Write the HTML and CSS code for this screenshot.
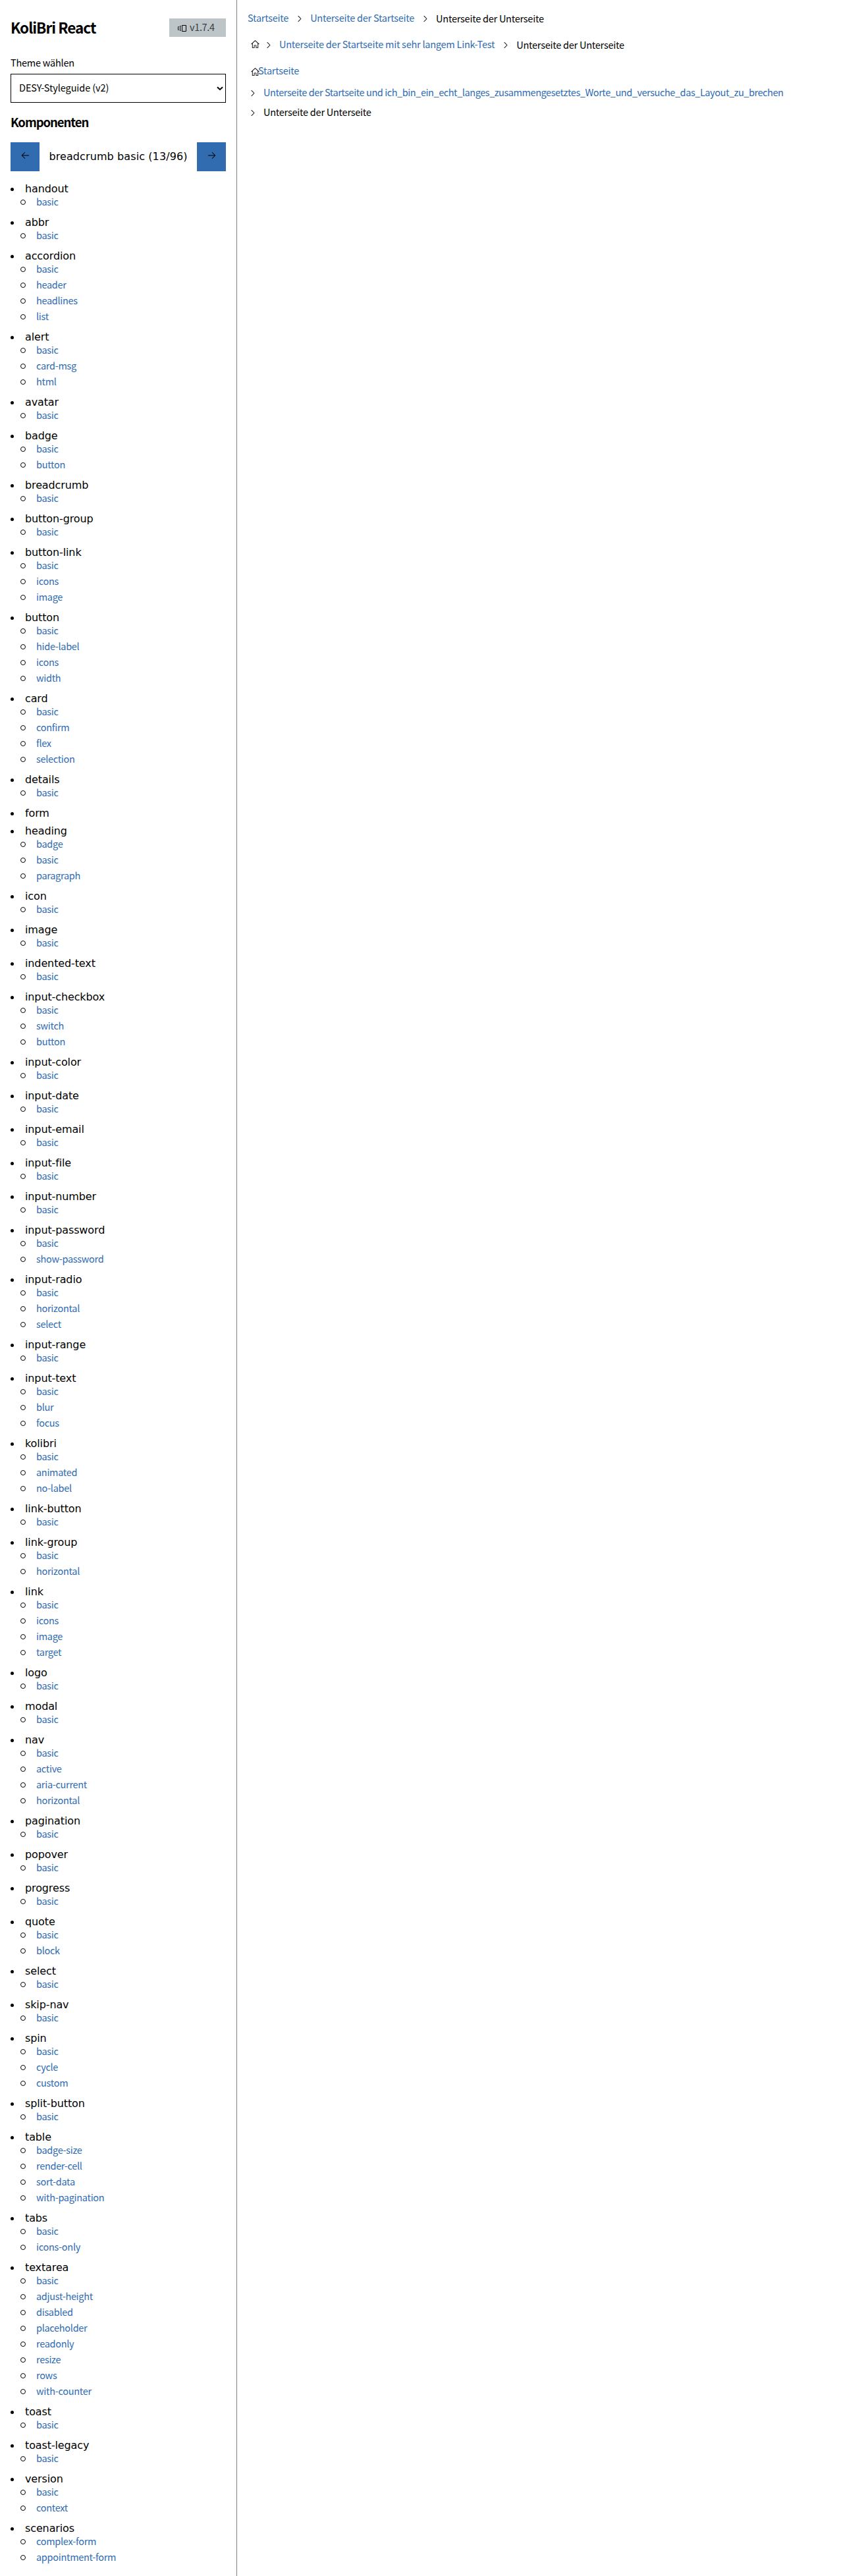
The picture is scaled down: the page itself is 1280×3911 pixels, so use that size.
FILE: index.html
```html
<!DOCTYPE html>
<html lang="de">
<head>
<meta charset="utf-8">
<title>KoliBri React</title>
<link rel="stylesheet" href="styles.css">
</head>
<body>
<svg class="sprite" aria-hidden="true">
  <symbol id="chevron" viewBox="0 0 16 16"><path d="M10.072 8.024L5.715 3.667l.618-.62L11 7.716v.618L6.333 13l-.618-.619 4.357-4.357z"/></symbol>
  <symbol id="home" viewBox="0 0 16 16"><path fill-rule="evenodd" d="M8.36 1.37l6.36 5.8-.71.71L13 6.964v6.526l-.5.5h-3l-.5-.5v-3.5H7v3.5l-.5.5h-3l-.5-.5V6.972L2 7.88l-.71-.71 6.35-5.8h.72zM4 6.063v6.927h2v-3.5l.5-.5h3l.5.5v3.5h2V6.057L8 2.43 4 6.063z"/></symbol>
  <symbol id="left" viewBox="0 0 16 16"><path d="M7 3.093l-5 5V8.8l5 5 .707-.707-4.146-4.147H14v-1H3.56L7.708 3.8 7 3.093z"/></symbol>
  <symbol id="right" viewBox="0 0 16 16"><path d="M9 13.887l5-5V8.18l-5-5-.707.707 4.146 4.147H2v1h10.44L8.292 13.18l.707.707z"/></symbol>
  <symbol id="versions" viewBox="0 0 15 15"><path fill="none" stroke="#000" d="M7.500 3.500h6v9h-6zM5.500 4.500h-1v7h1M2.500 5.500h-1v5h1"/></symbol>
</svg>
<div class="layout">
  <aside class="sidebar">
    <header class="head">
      <h1 class="title">KoliBri React</h1>
      <span class="badge"><svg class="icon"><use href="#versions"/></svg><span class="text">v1.7.4</span></span>
    </header>
    <label class="label" for="theme">Theme wählen</label>
    <div class="select" id="theme"><span class="text">DESY-Styleguide (v2)</span><svg class="caret" viewBox="0 0 10 7"><path d="M1 1.3l4 3.7 4-3.7" fill="none" stroke="#000" stroke-width="2"/></svg></div>
    <h2 class="subtitle">Komponenten</h2>
    <div class="pager">
      <button class="step" aria-label="zurück"><svg class="icon"><use href="#left"/></svg></button>
      <span class="current">breadcrumb basic (13/96)</span>
      <button class="step" aria-label="weiter"><svg class="icon"><use href="#right"/></svg></button>
    </div>
    <ul class="groups">
      <li>handout<ul><li><a>basic</a></li></ul></li>
      <li>abbr<ul><li><a>basic</a></li></ul></li>
      <li>accordion<ul><li><a>basic</a></li><li><a>header</a></li><li><a>headlines</a></li><li><a>list</a></li></ul></li>
      <li>alert<ul><li><a>basic</a></li><li><a>card-msg</a></li><li><a>html</a></li></ul></li>
      <li>avatar<ul><li><a>basic</a></li></ul></li>
      <li>badge<ul><li><a>basic</a></li><li><a>button</a></li></ul></li>
      <li>breadcrumb<ul><li><a>basic</a></li></ul></li>
      <li>button-group<ul><li><a>basic</a></li></ul></li>
      <li>button-link<ul><li><a>basic</a></li><li><a>icons</a></li><li><a>image</a></li></ul></li>
      <li>button<ul><li><a>basic</a></li><li><a>hide-label</a></li><li><a>icons</a></li><li><a>width</a></li></ul></li>
      <li>card<ul><li><a>basic</a></li><li><a>confirm</a></li><li><a>flex</a></li><li><a>selection</a></li></ul></li>
      <li>details<ul><li><a>basic</a></li></ul></li>
      <li>form<ul></ul></li>
      <li>heading<ul><li><a>badge</a></li><li><a>basic</a></li><li><a>paragraph</a></li></ul></li>
      <li>icon<ul><li><a>basic</a></li></ul></li>
      <li>image<ul><li><a>basic</a></li></ul></li>
      <li>indented-text<ul><li><a>basic</a></li></ul></li>
      <li>input-checkbox<ul><li><a>basic</a></li><li><a>switch</a></li><li><a>button</a></li></ul></li>
      <li>input-color<ul><li><a>basic</a></li></ul></li>
      <li>input-date<ul><li><a>basic</a></li></ul></li>
      <li>input-email<ul><li><a>basic</a></li></ul></li>
      <li>input-file<ul><li><a>basic</a></li></ul></li>
      <li>input-number<ul><li><a>basic</a></li></ul></li>
      <li>input-password<ul><li><a>basic</a></li><li><a>show-password</a></li></ul></li>
      <li>input-radio<ul><li><a>basic</a></li><li><a>horizontal</a></li><li><a>select</a></li></ul></li>
      <li>input-range<ul><li><a>basic</a></li></ul></li>
      <li>input-text<ul><li><a>basic</a></li><li><a>blur</a></li><li><a>focus</a></li></ul></li>
      <li>kolibri<ul><li><a>basic</a></li><li><a>animated</a></li><li><a>no-label</a></li></ul></li>
      <li>link-button<ul><li><a>basic</a></li></ul></li>
      <li>link-group<ul><li><a>basic</a></li><li><a>horizontal</a></li></ul></li>
      <li>link<ul><li><a>basic</a></li><li><a>icons</a></li><li><a>image</a></li><li><a>target</a></li></ul></li>
      <li>logo<ul><li><a>basic</a></li></ul></li>
      <li>modal<ul><li><a>basic</a></li></ul></li>
      <li>nav<ul><li><a>basic</a></li><li><a>active</a></li><li><a>aria-current</a></li><li><a>horizontal</a></li></ul></li>
      <li>pagination<ul><li><a>basic</a></li></ul></li>
      <li>popover<ul><li><a>basic</a></li></ul></li>
      <li>progress<ul><li><a>basic</a></li></ul></li>
      <li>quote<ul><li><a>basic</a></li><li><a>block</a></li></ul></li>
      <li>select<ul><li><a>basic</a></li></ul></li>
      <li>skip-nav<ul><li><a>basic</a></li></ul></li>
      <li>spin<ul><li><a>basic</a></li><li><a>cycle</a></li><li><a>custom</a></li></ul></li>
      <li>split-button<ul><li><a>basic</a></li></ul></li>
      <li>table<ul><li><a>badge-size</a></li><li><a>render-cell</a></li><li><a>sort-data</a></li><li><a>with-pagination</a></li></ul></li>
      <li>tabs<ul><li><a>basic</a></li><li><a>icons-only</a></li></ul></li>
      <li>textarea<ul><li><a>basic</a></li><li><a>adjust-height</a></li><li><a>disabled</a></li><li><a>placeholder</a></li><li><a>readonly</a></li><li><a>resize</a></li><li><a>rows</a></li><li><a>with-counter</a></li></ul></li>
      <li>toast<ul><li><a>basic</a></li></ul></li>
      <li>toast-legacy<ul><li><a>basic</a></li></ul></li>
      <li>version<ul><li><a>basic</a></li><li><a>context</a></li></ul></li>
      <li>scenarios<ul><li><a>complex-form</a></li><li><a>appointment-form</a></li></ul></li>
    </ul>
  </aside>
  <main class="content">
    <nav class="crumbs">
      <a>Startseite</a><svg class="icon"><use href="#chevron"/></svg><a>Unterseite der Startseite</a><svg class="icon"><use href="#chevron"/></svg><span class="here">Unterseite der Unterseite</span>
    </nav>
    <nav class="crumbs">
      <svg class="icon home"><use href="#home"/></svg><svg class="icon"><use href="#chevron"/></svg><a>Unterseite der Startseite mit sehr langem Link-Test</a><svg class="icon"><use href="#chevron"/></svg><span class="here">Unterseite der Unterseite</span>
    </nav>
    <nav class="crumbs-stacked">
      <div class="crumb first"><svg class="icon"><use href="#home"/></svg><a>Startseite</a></div>
      <div class="crumb"><svg class="icon"><use href="#chevron"/></svg><a class="long">Unterseite der Startseite und ich_bin_ein_echt_langes_zusammengesetztes_Worte_und_versuche_das_Layout_zu_brechen</a></div>
      <div class="crumb"><svg class="icon"><use href="#chevron"/></svg><span class="text">Unterseite der Unterseite</span></div>
    </nav>
  </main>
</div>
</body>
</html>
```
FILE: styles.css
```css
* { box-sizing: border-box; }
body {
  margin: 0;
  background: #fff;
  color: #000;
  font: 14.5px/24px "Noto Sans CJK SC", "Noto Sans", sans-serif;
  letter-spacing: -0.24px;
}
ul { margin: 0; padding: 0; list-style: none; }
a { color: #2f6bb3; }
a, .text { padding-bottom: 2px; }
.sprite { display: none; }
.icon { width: 15px; height: 15px; flex: none; }
.layout { display: grid; grid-template-columns: 360px 1fr; min-height: 3911px; }

.sidebar { padding: 28px 16px 16px; border-right: 1px solid #808080; }
.head { display: flex; align-items: center; justify-content: space-between; height: 28px; }
.title { margin: 0; padding-bottom: 3px; font-size: 22.5px; letter-spacing: -1px; }
.badge {
  display: flex;
  align-items: center;
  gap: 4px;
  width: 86px;
  height: 28px;
  padding-left: 12px;
  background: #bdc5c9;
  color: #3a3e41;
  letter-spacing: -0.35px;
}
.label { display: block; margin-top: 27px; }
.select {
  display: flex;
  align-items: center;
  justify-content: space-between;
  height: 44px;
  margin-top: 5px;
  padding: 0 3px 0 12px;
  border: 1px solid #000;
  letter-spacing: -0.1px;
}
.caret { width: 10px; height: 7px; }
.subtitle { margin: 17px 0 0; font-size: 18.5px; letter-spacing: -1.05px; }
.pager { display: flex; align-items: center; justify-content: space-between; margin-top: 19px; }
.step {
  display: flex;
  align-items: center;
  justify-content: center;
  width: 44px;
  height: 44px;
  padding: 0 0 5px;
  border: 0;
  background: #326cb0;
}
.current { font: 16px/24px "DejaVu Sans", sans-serif; letter-spacing: 0.1px; }

.groups { margin-top: 17px; }
.groups > li {
  position: relative;
  margin-bottom: 9px;
  padding-left: 22px;
  font: 16px/20px "DejaVu Sans", sans-serif;
  letter-spacing: -0.12px;
}
.groups > li::before {
  content: "";
  position: absolute;
  left: 0;
  top: 8px;
  width: 5px;
  height: 5px;
  border-radius: 50%;
  background: #000;
}
.groups ul { margin-top: -2px; }
.groups ul li {
  display: flex;
  align-items: center;
  gap: 16px;
  height: 24px;
  margin-left: -7px;
  font: 14.5px/24px "Noto Sans CJK SC", "Noto Sans", sans-serif;
  letter-spacing: -0.3px;
}
.groups ul li::before {
  content: "";
  width: 6px;
  height: 6px;
  border: 1px solid #000;
  border-radius: 50%;
}

.content { padding: 16px 16px 0; }
.crumbs { display: flex; align-items: center; gap: 9px; height: 24px; margin-bottom: 16px; }
.home { margin: 0 -4px 2px 4px; }
.crumbs-stacked { display: flex; flex-direction: column; }
.crumb { display: flex; align-items: center; gap: 9px; height: 30px; }
.first { height: 24px; margin-bottom: 6px; padding-left: 4px; gap: 0; }
.first a { margin-left: -3px; }
.first .icon { margin-top: 2px; }
.long { letter-spacing: -0.43px; }
```
